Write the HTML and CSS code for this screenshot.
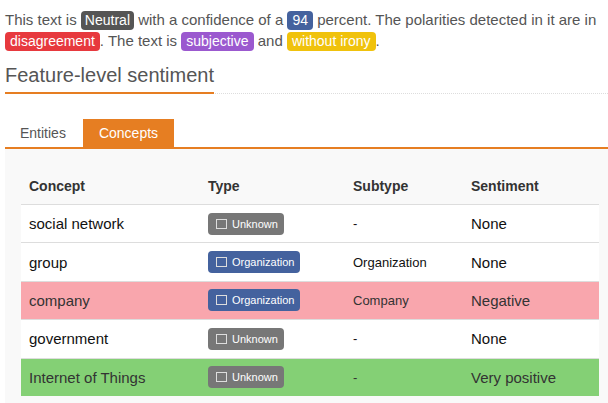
FILE: index.html
```html
<!DOCTYPE html>
<html lang="en">

<head>
    <meta charset="UTF-8">
    <meta name="viewport" content="width=device-width, initial-scale=1.0">
    <title>Sentiment</title>
    <link rel="stylesheet" href="styles.css">
</head>

<body>
    <p class="summary">
        This text is <span class="label neutral">Neutral</span> with a confidence of a
        <span class="label blue">94</span> percent. The polarities detected in it are in
        <span class="label red">disagreement</span>. The text is
        <span class="label purple">subjective</span> and
        <span class="label yellow">without irony</span>.
    </p>

    <h2 class="section-title"><span>Feature-level sentiment</span></h2>

    <div class="tabs">
        <div class="tab">Entities</div>
        <div class="tab active">Concepts</div>
    </div>

    <div class="panel">
        <table class="concepts">
            <thead>
                <tr>
                    <th class="c1">Concept</th>
                    <th class="c2">Type</th>
                    <th class="c3">Subtype</th>
                    <th class="c4">Sentiment</th>
                </tr>
            </thead>
            <tbody>
                <tr>
                    <td>social network</td>
                    <td><span class="type unknown"><i class="box"></i>Unknown</span></td>
                    <td class="sub">-</td>
                    <td>None</td>
                </tr>
                <tr>
                    <td>group</td>
                    <td><span class="type org"><i class="box"></i>Organization</span></td>
                    <td class="sub">Organization</td>
                    <td>None</td>
                </tr>
                <tr class="negative">
                    <td>company</td>
                    <td><span class="type org"><i class="box"></i>Organization</span></td>
                    <td class="sub">Company</td>
                    <td>Negative</td>
                </tr>
                <tr>
                    <td>government</td>
                    <td><span class="type unknown"><i class="box"></i>Unknown</span></td>
                    <td class="sub">-</td>
                    <td>None</td>
                </tr>
                <tr class="positive">
                    <td>Internet of Things</td>
                    <td><span class="type unknown"><i class="box"></i>Unknown</span></td>
                    <td class="sub">-</td>
                    <td>Very positive</td>
                </tr>
            </tbody>
        </table>
    </div>
</body>

</html>
```

FILE: styles.css
```css
body {
    font-family: 'Liberation Sans', Arial, sans-serif;
    margin: 0;
    padding: 0 0 0 5px;
    color: #555;
    background: white;
}

.summary {
    font-size: 15px;
    line-height: 21px;
    margin: 0;
    padding-top: 9px;
}

.label {
    display: inline-block;
    font-size: 14px;
    color: white;
    padding: 0 5px;
    line-height: 19px;
    border-radius: 4px;
}

.neutral {
    background: #555555;
    padding: 0 4px;
}

.blue {
    background: #44629e;
}

.red {
    background: #e7393e;
}

.purple {
    background: #9b59cf;
}

.yellow {
    background: #f0c20c;
}

.section-title {
    font-size: 20px;
    font-weight: normal;
    margin: 12px 0 0;
    border-bottom: 1px dotted #ddd;
    line-height: 24px;
}

.section-title span {
    display: inline-block;
    padding-bottom: 5px;
    border-bottom: 2px solid #e67e22;
    margin-bottom: -1px;
}

.tabs {
    display: flex;
    margin-top: 25px;
    font-size: 14px;
}

.tab {
    padding: 0 15px;
    line-height: 28px;
    color: #555;
}

.tab.active {
    background: #e67e22;
    color: white;
    margin-left: 2px;
    padding: 0 16px;
}

.panel {
    border-top: 2px solid #e67e22;
    background: #f9f9f9;
    padding: 18px 9px 20px 16px;
}

.concepts {
    width: 100%;
    border-collapse: collapse;
    font-size: 15px;
    color: #111;
}

.concepts th {
    text-align: left;
    font-weight: bold;
    font-size: 14px;
    color: #333;
    padding: 0 8px;
    height: 37px;
    border-bottom: 1px solid #ddd;
}

.concepts td {
    padding: 0 8px;
    height: 37.4px;
    background: white;
    border-top: 1px solid #ddd;
}

.c1 {
    width: 163px;
}

.c2 {
    width: 129px;
}

.c3 {
    width: 102px;
}

.concepts td.sub {
    font-size: 13px;
}

.negative td {
    background: #f9a6ad;
    color: #333;
}

.positive td {
    background: #84d075;
    color: #333;
}

.type {
    display: inline-flex;
    align-items: center;
    gap: 5px;
    font-size: 11px;
    color: white;
    line-height: 22px;
    padding: 0 6px 0 8px;
    border-radius: 4px;
}

.unknown {
    background: #777;
}

.org {
    background: #44629e;
}

.box {
    display: inline-block;
    width: 9px;
    height: 8px;
    border: 1px solid #ddd;
}
```
